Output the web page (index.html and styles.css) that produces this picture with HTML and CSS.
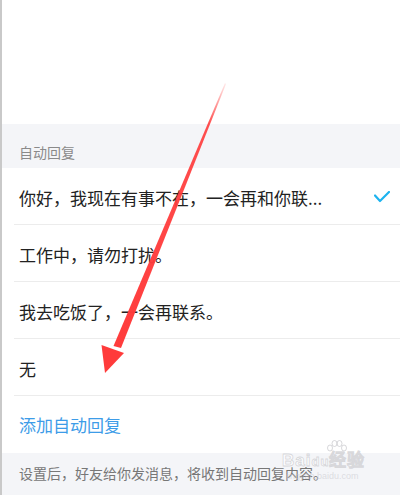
FILE: index.html
```html
<!DOCTYPE html>
<html lang="zh-CN">
<head>
    <meta charset="UTF-8">
    <meta name="viewport" content="width=device-width, initial-scale=1.0">
    <title>自动回复</title>
    <link rel="stylesheet" href="styles.css">
</head>
<body>
    <div class="page">
        <div class="top-space"></div>

        <div class="section-title">自动回复</div>

        <ul class="reply-list">
            <li class="reply-item">
                <span class="reply-text">你好，我现在有事不在，一会再和你联...</span>
                <svg class="check" width="16" height="12" viewBox="0 0 16 12">
                    <path d="M1 4.5 L6 10 L15 1" fill="none" stroke="#1db3ef" stroke-width="2.2" stroke-linecap="round" stroke-linejoin="round"/>
                </svg>
            </li>
            <li class="reply-item"><span class="reply-text">工作中，请勿打扰。</span></li>
            <li class="reply-item"><span class="reply-text">我去吃饭了，一会再联系。</span></li>
            <li class="reply-item"><span class="reply-text">无</span></li>
        </ul>

        <div class="add-reply">添加自动回复</div>

        <div class="footer-note">设置后，好友给你发消息，将收到自动回复内容。</div>
    </div>

    <!-- 标注箭头 -->
    <svg class="arrow" width="400" height="495" viewBox="0 0 400 495">
        <defs>
            <linearGradient id="fade" x1="225" y1="83" x2="110" y2="350" gradientUnits="userSpaceOnUse">
                <stop offset="0" stop-color="#ff3b3b" stop-opacity="0.1"/>
                <stop offset="0.15" stop-color="#ff3b3b" stop-opacity="0.9"/>
                <stop offset="1" stop-color="#ff3b3b"/>
            </linearGradient>
        </defs>
        <polygon points="225,83 226,84 121,348 113.5,346" fill="url(#fade)"/>
        <polygon points="101.5,345 124,353 105,373" fill="#ff3b3b"/>
    </svg>

    <div class="watermark">
        <svg class="wm-paw" width="22" height="16" viewBox="0 0 22 16">
            <g fill="none" stroke="rgba(190,190,195,0.6)" stroke-width="1">
                <ellipse cx="4" cy="8" rx="2.5" ry="3"/>
                <ellipse cx="8.5" cy="3.5" rx="2.5" ry="3"/>
                <ellipse cx="13.5" cy="3.5" rx="2.5" ry="3"/>
                <ellipse cx="18" cy="8" rx="2.5" ry="3"/>
            </g>
        </svg>
        <span class="wm-logo">Bai<span class="wm-du">du</span>经验</span>
        <span class="wm-url">jingyan.baidu.com</span>
    </div>
</body>
</html>
```

FILE: styles.css
```css
* {
    margin: 0;
    padding: 0;
    box-sizing: border-box;
}

body {
    width: 400px;
    height: 495px;
    overflow: hidden;
    background: #fff;
    font-family: "Noto Sans CJK SC", "Noto Sans", sans-serif;
    position: relative;
}

.page {
    border-left: 2px solid #c9c9c9;
    height: 495px;
}

.top-space {
    height: 124px;
    background: #fff;
}

.section-title {
    height: 44px;
    background: #f4f5f8;
    color: #8a8a8a;
    font-size: 14px;
    line-height: 16px;
    padding: 20px 0 0 17px;
}

.reply-list {
    list-style: none;
    background: #fff;
}

.reply-item {
    height: 57px;
    margin-left: 12px;
    padding: 2px 10px 0 5px;
    border-bottom: 1px solid #ececec;
    display: flex;
    align-items: center;
    justify-content: space-between;
}

.reply-text {
    font-size: 17px;
    color: #222;
}

.check {
    display: block;
}

.add-reply {
    height: 57px;
    padding-left: 17px;
    display: flex;
    align-items: center;
    font-size: 17px;
    color: #3d9ce8;
    background: #fff;
}

.footer-note {
    height: 42px;
    background: #f4f5f8;
    color: #777;
    font-size: 14px;
    padding: 10px 0 0 17px;
}

.arrow {
    position: absolute;
    left: 0;
    top: 0;
    pointer-events: none;
}

.watermark {
    position: absolute;
    left: 282px;
    top: 440px;
    display: flex;
    flex-direction: column;
    pointer-events: none;
}

.wm-paw {
    display: block;
    margin-left: 44px;
}

.wm-logo {
    font-family: "Liberation Sans", sans-serif;
    font-size: 17px;
    font-weight: bold;
    letter-spacing: 1px;
    line-height: 18px;
    margin-top: -4px;
    color: rgba(255, 255, 255, 0.8);
    -webkit-text-stroke: 0.8px rgba(185, 185, 190, 0.55);
}

.wm-du {
    font-size: 13px;
}

.wm-url {
    font-family: "Liberation Sans", sans-serif;
    font-size: 9px;
    line-height: 10px;
    padding-left: 4px;
    color: rgba(195, 195, 200, 0.5);
}
```
